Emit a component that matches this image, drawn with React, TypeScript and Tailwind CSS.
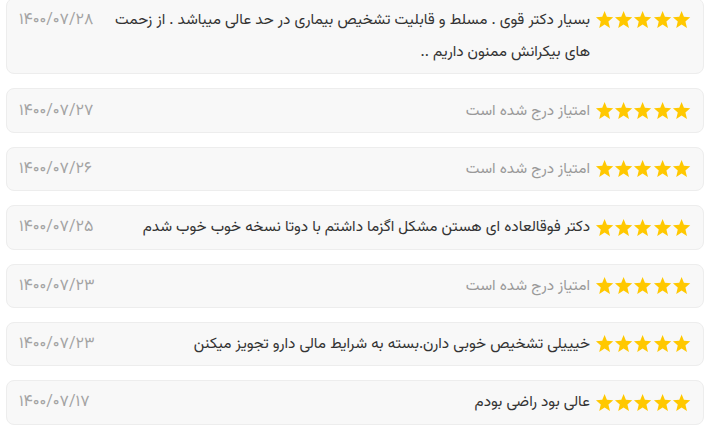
import React from "react";

const reviews = [
  { text: "بسیار دکتر قوی . مسلط و قابلیت تشخیص بیماری در حد عالی میباشد . از زحمت های بیکرانش ممنون داریم ..", date: "۱۴۰۰/۰۷/۲۸", muted: false },
  { text: "امتیاز درج شده است", date: "۱۴۰۰/۰۷/۲۷", muted: true },
  { text: "امتیاز درج شده است", date: "۱۴۰۰/۰۷/۲۶", muted: true },
  { text: "دکتر فوقالعاده ای هستن مشکل اگزما داشتم با دوتا نسخه خوب خوب شدم", date: "۱۴۰۰/۰۷/۲۵", muted: false },
  { text: "امتیاز درج شده است", date: "۱۴۰۰/۰۷/۲۳", muted: true },
  { text: "خیییلی تشخیص خوبی دارن.بسته به شرایط مالی دارو تجویز میکنن", date: "۱۴۰۰/۰۷/۲۳", muted: false },
  { text: "عالی بود راضی بودم", date: "۱۴۰۰/۰۷/۱۷", muted: false },
];

function Star() {
  return (
    <svg width="19.2" height="19.5" viewBox="0 0 24 24" className="shrink-0">
      <polygon
        points="12,1 14.9,8.4 22.8,9 16.8,14.2 18.7,22.2 12,17.9 5.3,22.2 7.2,14.2 1.2,9 9.1,8.4"
        fill="#FFC800"
      />
    </svg>
  );
}

export default function App() {
  return (
    <div
      dir="rtl"
      className="w-[710px] px-[6px] -mt-[2px] bg-white"
      style={{ fontFamily: '"Vazirmatn", "Noto Sans Arabic", "Noto Naskh Arabic", "DejaVu Sans", sans-serif' }}
    >
      {reviews.map((r, i) => (
        <div
          key={i}
          className="flex items-start justify-between rounded-lg border border-[#ededed] bg-[#f8f8f8] pr-[12px] pl-[12px] py-[5.2px] mb-[14px]"
        >
          <div className="flex items-start gap-[5px] flex-1 min-w-0">
            <div className="flex h-[32px] items-center shrink-0">
              <Star />
              <Star />
              <Star />
              <Star />
              <Star />
            </div>
            <div
              className={`text-[15.3px] leading-[32px] ${r.muted ? "text-[#9a9a9a]" : "text-[#333333]"}`}
            >
              {r.text}
            </div>
          </div>
          <div
            dir="ltr"
            className="text-[16px] leading-[30px] pt-[2px] text-[#a3a3a3] whitespace-nowrap mr-[14px] shrink-0"
          >
            {r.date}
          </div>
        </div>
      ))}
    </div>
  );
}
